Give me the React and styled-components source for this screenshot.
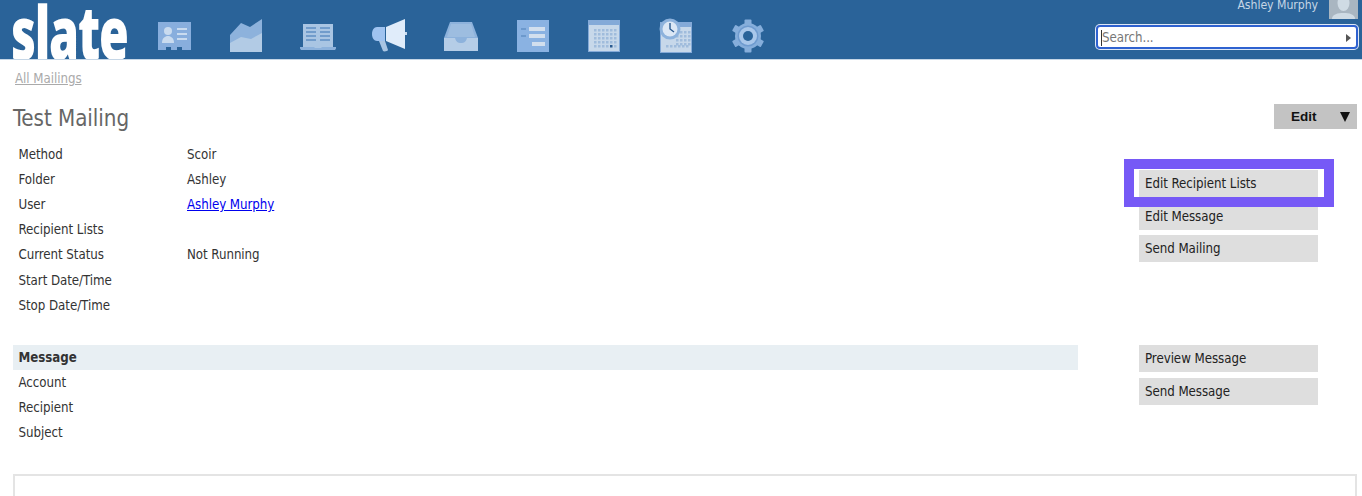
import React from "react";
import styled, { createGlobalStyle } from "styled-components";

const Global = createGlobalStyle`
  html, body { margin: 0; padding: 0; background: #fff; }
  body { font-family: "DejaVu Sans", Verdana, sans-serif; font-stretch: condensed; font-size: 13.2px; letter-spacing: -0.05px; color: #333; height: 496px; overflow: hidden; }
`;

const Header = styled.header`
  height: 59px;
  background: #2a6399;
  border-bottom: 1px solid #c5d6e6;
  display: flex;
  align-items: stretch;
  overflow: hidden;
`;
const LogoBox = styled.div`
  width: 139px;
  flex: none;
  height: 59px;
  position: relative;
  overflow: hidden;
`;
const Logo = styled.span`
  position: absolute;
  left: 11px;
  top: 1px;
  font-family: "Open Sans", sans-serif;
  font-stretch: normal;
  font-weight: 800;
  font-size: 75px;
  line-height: 60px;
  letter-spacing: -2px;
  color: #fff;
  transform: scaleX(0.645);
  transform-origin: left top;
`;
const Nav = styled.nav`
  display: flex;
  flex: 1;
  align-items: center;
  padding-top: 13px;
`;
const NavItem = styled.a`
  width: 71.6px;
  flex: none;
  display: flex;
  justify-content: center;
  align-items: center;
`;
const HeaderRight = styled.div`
  width: 266px;
  flex: none;
  display: flex;
  flex-direction: column;
  align-items: flex-end;
  padding-right: 4px;
`;
const UserRow = styled.div`
  display: flex;
  height: 19px;
  gap: 11px;
  margin-bottom: 6px;
`;
const UserName = styled.span`
  color: #c5d6e6;
  font-size: 12.2px;
  line-height: 11px;
`;
const Avatar = styled.svg`
  width: 29px;
  height: 19px;
  display: block;
`;
const SearchBox = styled.div`
  width: 262px;
  height: 24px;
  box-sizing: border-box;
  background: #fff;
  border: 2px solid #2f62d0;
  box-shadow: 0 0 0 1px #dfe8f5;
  border-radius: 4px;
  display: flex;
  align-items: center;
  padding: 1px 5px 0 3px;
  justify-content: space-between;
`;
const SearchHint = styled.span`
  color: #777;
  font-size: 13.2px;
  border-left: 1px solid #333;
  line-height: 16px;
`;
const SearchArrow = styled.span`
  width: 0;
  height: 0;
  border-left: 5px solid #555;
  border-top: 4px solid transparent;
  border-bottom: 4px solid transparent;
`;

const Page = styled.main`
  padding: 0 5px 0 13px;
`;
const Crumb = styled.a`
  display: block;
  padding: 11px 0 0 2px;
  height: 28px;
  box-sizing: border-box;
  color: #aaa;
  line-height: 16px;
  text-decoration: underline;
`;
const TitleRow = styled.div`
  display: flex;
  justify-content: space-between;
  align-items: flex-start;
  height: 54px;
  padding-top: 15px;
  box-sizing: border-box;
`;
const Title = styled.h1`
  margin: 0;
  color: #666;
  font-weight: 400;
  font-size: 22.2px;
  line-height: 30px;
`;
const EditButton = styled.button`
  width: 83px;
  height: 25px;
  margin-top: 1px;
  border: 0;
  background: #c3c3c3;
  color: #111;
  font-family: "Liberation Sans", sans-serif;
  font-stretch: normal;
  font-weight: 700;
  font-size: 13.5px;
  display: flex;
  align-items: center;
  padding: 0 7px 0 17px;
  justify-content: space-between;
`;
const Caret = styled.span`
  width: 0;
  height: 0;
  border-left: 5px solid transparent;
  border-right: 5px solid transparent;
  border-top: 10px solid #111;
`;
const Section = styled.section`
  display: grid;
  grid-template-columns: 1065px 1fr;
`;
const Info = styled.div`
  display: flex;
  flex-direction: column;
`;
const Row = styled.div`
  display: grid;
  grid-template-columns: 168.500px 1fr;
  height: 25.100px;
  padding-left: 5.500px;
  align-items: center;
  background: ${(p) => (p.$head ? "#e8eff3" : "transparent")};
  font-weight: ${(p) => (p.$head ? 700 : 400)};
`;
const UserLink = styled.a`
  color: #0000ee;
  text-decoration: underline;
`;
const Actions = styled.div`
  display: flex;
  flex-direction: column;
  gap: 5.500px;
  padding-left: 61px;
  padding-top: ${(p) => p.$top || 0}px;
  position: relative;
`;
const Action = styled.button`
  width: 179px;
  height: 27px;
  border: 0;
  background: #dedede;
  color: #222;
  font: inherit;
  letter-spacing: inherit;
  text-align: left;
  padding: 0 6px;
`;
const Highlight = styled.div`
  position: absolute;
  left: 46px;
  top: 17px;
  width: 190px;
  height: 28px;
  border: 10px solid #7659f6;
  pointer-events: none;
`;
const SectionTop = styled(Section)`
  height: 203px;
`;
const Panel = styled.div`
  margin-top: 28.600px;
  height: 40px;
  border: 2px solid #e4e4e4;
  border-bottom: 0;
`;

const IconBase = styled.svg`
  width: 38px;
  height: 36px;
  display: block;
`;

const CardIcon = () => (
  <IconBase viewBox="0 0 38 36">
    <path d="M2 4h33v28h-9v-3h-5v3h-6v-3h-5v3H2z" fill="#88aedd" />
    <circle cx="12" cy="13" r="4" fill="#c9dbef" />
    <path d="M6 25c0-5 3-7 6-7s6 2 6 7z" fill="#c9dbef" />
    <path d="M21 11h10M21 16h10M21 21h10" stroke="#c9dbef" strokeWidth="2" />
  </IconBase>
);
const ChartIcon = () => (
  <IconBase viewBox="0 0 38 36">
    <path d="M3 17L14 5l9 4 12-8v20l-12 4-9-2-11 5z" fill="#8db2dc" />
    <path d="M3 25l11-6 10 2 11-6v19H3z" fill="#b2cbe5" />
  </IconBase>
);
const BookIcon = () => (
  <IconBase viewBox="0 0 38 36">
    <path d="M4 6h30v24H4z" fill="#a9c5e3" />
    <path d="M1 29h14l1 1h6l1-1h14v1c0 1.500-1 2-2 2H3c-1 0-2-.5-2-2z" fill="#8db2dc" />
    <path d="M7 10h10M7 14h10M7 18h10M7 22h10M21 10h10M21 14h10M21 18h10M21 22h10" stroke="#5f8fc4" strokeWidth="1.500" />
  </IconBase>
);
const MegaphoneIcon = () => (
  <IconBase viewBox="0 0 38 36">
    <path d="M15 9L34 1v30L15 23z" fill="#e0ecfa" />
    <path d="M34 14h2v3h-2z" fill="#c9dbef" />
    <path d="M6 9h8v14H6c-3 0-5-3-5-7s2-7 5-7z" fill="#9fc3f0" />
    <path d="M8 23h6l3 9c0 1-4 2-5 1z" fill="#a9c5e3" />
  </IconBase>
);
const TrayIcon = () => (
  <IconBase viewBox="0 0 38 36">
    <path d="M8 4h22l6 16v12H2V20z" fill="#8db2dc" />
    <path d="M9 6h20l4 13H5z" fill="#9dbde0" />
    <path d="M2 20h11c1 4 3 5 6 5s5-1 6-5h11v13H2z" fill="#b5cde7" />
  </IconBase>
);
const ListIcon = () => (
  <IconBase viewBox="0 0 38 36">
    <path d="M3 2h32v32H3z" fill="#8ab2e2" />
    <path d="M15 9h16v4H15zM15 16h16v4H15zM18 24h13v4H18z" fill="#d2dfee" />
    <path d="M7 11h5M7 18h5" stroke="#4f80b8" strokeWidth="1.200" />
  </IconBase>
);
const dots = (x0, y0, cols, rows, s, skipDark) => {
  const out = [];
  for (let r = 0; r < rows; r++)
    for (let c = 0; c < cols; c++) {
      const dark = skipDark && r === rows - 1 && c === cols - 2;
      out.push(
        <rect key={`${r}-${c}`} x={x0 + c * s} y={y0 + r * s} width="2.500" height="2.500" fill={dark ? "#2a5a90" : "#a0bcdc"} />
      );
    }
  return out;
};
const CalendarIcon = () => (
  <IconBase viewBox="0 0 38 36">
    <path d="M3 2h32v32H3z" fill="#84aad8" />
    <path d="M4 7h30v26H4z" fill="#c7d8ea" />
    {dots(9, 11, 6, 5, 4, true)}
  </IconBase>
);
const ClockIcon = () => (
  <IconBase viewBox="0 0 38 36">
    <path d="M3 4h32v31H3z" fill="#84aad8" />
    <path d="M4 9h30v25H4z" fill="#c7d8ea" />
    {dots(19, 13, 4, 4, 4, false)}
    {dots(9, 27, 6, 1, 4, false)}
    <circle cx="13" cy="11" r="10.500" fill="#8db2dc" />
    <circle cx="13" cy="11" r="7.500" fill="#dbe7f5" />
    <path d="M13 5v6l4 3" fill="none" stroke="#2a5a90" strokeWidth="1.400" />
  </IconBase>
);
const GearIcon = () => (
  <IconBase viewBox="0 0 38 36">
    <g fill="#86aedb">
      <circle cx="19" cy="18" r="13" />
      {[0, 60, 120, 180, 240, 300].map((a) => (
        <rect key={a} x="15.500" y="1.500" width="7" height="7" rx="1" transform={`rotate(${a} 19 18)`} />
      ))}
    </g>
    <circle cx="19" cy="18" r="10.500" fill="#6f9bcf" />
    <circle cx="19" cy="18" r="9" fill="#a9c7ea" />
    <circle cx="19" cy="18" r="5" fill="#2a6399" />
  </IconBase>
);

export default function App() {
  const infoRows = [
    ["Method", "Scoir"],
    ["Folder", "Ashley"],
    ["User", <UserLink key="u" href="#">Ashley Murphy</UserLink>],
    ["Recipient Lists", ""],
    ["Current Status", "Not Running"],
    ["Start Date/Time", ""],
    ["Stop Date/Time", ""],
  ];
  return (
    <>
      <Global />
      <Header>
        <LogoBox><Logo>slate</Logo></LogoBox>
        <Nav>
          <NavItem><CardIcon /></NavItem>
          <NavItem><ChartIcon /></NavItem>
          <NavItem><BookIcon /></NavItem>
          <NavItem><MegaphoneIcon /></NavItem>
          <NavItem><TrayIcon /></NavItem>
          <NavItem><ListIcon /></NavItem>
          <NavItem><CalendarIcon /></NavItem>
          <NavItem><ClockIcon /></NavItem>
          <NavItem><GearIcon /></NavItem>
        </Nav>
        <HeaderRight>
          <UserRow>
            <UserName>Ashley Murphy</UserName>
            <Avatar viewBox="0 0 29 19">
              <rect width="29" height="19" fill="#a9b6c1" />
              <ellipse cx="14.500" cy="3" rx="6" ry="8" fill="#cfdbe4" />
              <path d="M3 19c0-5 6-6 11.500-6s11.500 1 11.500 6z" fill="#cfdbe4" />
            </Avatar>
          </UserRow>
          <SearchBox>
            <SearchHint>Search...</SearchHint>
            <SearchArrow />
          </SearchBox>
        </HeaderRight>
      </Header>
      <Page>
        <Crumb href="#">All Mailings</Crumb>
        <TitleRow>
          <Title>Test Mailing</Title>
          <EditButton>Edit<Caret /></EditButton>
        </TitleRow>
        <SectionTop>
          <Info>
            {infoRows.map(([k, v]) => (
              <Row key={k}><span>{k}</span><span>{v}</span></Row>
            ))}
          </Info>
          <Actions $top={28}>
            <Action>Edit Recipient Lists</Action>
            <Action>Edit Message</Action>
            <Action>Send Mailing</Action>
            <Highlight />
          </Actions>
        </SectionTop>
        <Section>
          <Info>
            <Row $head><span>Message</span></Row>
            <Row><span>Account</span></Row>
            <Row><span>Recipient</span></Row>
            <Row><span>Subject</span></Row>
          </Info>
          <Actions>
            <Action>Preview Message</Action>
            <Action>Send Message</Action>
          </Actions>
        </Section>
        <Panel />
      </Page>
    </>
  );
}
